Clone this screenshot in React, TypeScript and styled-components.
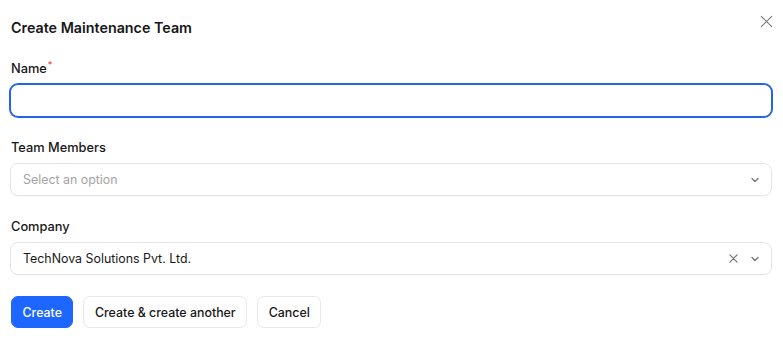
import React from "react";
import styled, { createGlobalStyle } from "styled-components";

const Global = createGlobalStyle`
  html, body { margin: 0; padding: 0; background: #fff; }
  body { font-family: Inter, "Noto Sans", sans-serif; color: #171717; -webkit-font-smoothing: antialiased; }
  * { box-sizing: border-box; }
`;

const Dialog = styled.div`
  position: relative;
  width: 783px;
  padding: 17px 11px 14px 10px;
  display: flex;
  flex-direction: column;
`;

const Title = styled.h2`
  margin: 0 0 19px 1px;
  font-size: 14.3px;
  line-height: 22px;
  font-weight: 600;
  color: #171717;
`;

const CloseButton = styled.button`
  position: absolute;
  top: 14px;
  right: 10px;
  width: 14px;
  height: 14px;
  padding: 0;
  border: 0;
  background: none;
  color: #7d7d7d;
  display: flex;
  align-items: center;
  justify-content: center;
`;

const Fields = styled.div`
  display: flex;
  flex-direction: column;
  gap: 20px;
`;

const Field = styled.div`
  display: flex;
  flex-direction: column;
  gap: 5px;
`;

const Label = styled.label`
  font-size: 12.8px;
  line-height: 20px;
  padding-top: 1px;
  font-weight: 500;
  color: #171717;
  padding-left: 1px;
`;

const Required = styled.sup`
  color: #ef4444;
  font-size: 9px;
  margin-left: 1px;
  vertical-align: 5px;
  line-height: 0;
`;

const TextInput = styled.input`
  height: 33px;
  width: 100%;
  border: 1px solid #2563eb;
  box-shadow: 0 0 0 1px #2563eb;
  border-radius: 8px;
  outline: none;
  padding: 0 12px;
  font: inherit;
  font-size: 12.4px;
`;

const SelectBox = styled.div`
  height: 33px;
  border: 1px solid #e5e5e5;
  border-radius: 8px;
  display: flex;
  align-items: center;
  padding: 0 10px 0 12px;
  font-size: 12.4px;
  box-shadow: 0 1px 1px rgba(0,0,0,0.03);
`;

const SelectValue = styled.span<{ $placeholder?: boolean }>`
  flex: 1;
  color: ${(p) => (p.$placeholder ? "#a3a3a3" : "#171717")};
`;

const Icons = styled.span`
  display: flex;
  align-items: center;
  gap: 11px;
  color: #737373;
`;

const Actions = styled.div`
  display: flex;
  gap: 10px;
  margin-top: 21px;
  padding-left: 1px;
`;

const Button = styled.button<{ $primary?: boolean }>`
  height: 32px;
  padding: 0 10.5px;
  border-radius: 7px;
  font: inherit;
  font-size: 12.4px;
  font-weight: 500;
  border: 1px solid ${(p) => (p.$primary ? "#1d66ff" : "#e8e8e8")};
  background: ${(p) => (p.$primary ? "#1d66ff" : "#fff")};
  color: ${(p) => (p.$primary ? "#fff" : "#171717")};
`;

const Chevron = () => (
  <svg width="12" height="12" viewBox="0 0 12 12" fill="none" stroke="currentColor" strokeWidth="1.3" strokeLinecap="round" strokeLinejoin="round">
    <path d="M3 4.5 6 7.5 9 4.5" />
  </svg>
);

const XIcon = ({ size = 10, stroke = 1.3 }: { size?: number; stroke?: number }) => (
  <svg width={size} height={size} viewBox="0 0 10 10" fill="none" stroke="currentColor" strokeWidth={stroke} strokeLinecap="round">
    <path d="M1 1 9 9M9 1 1 9" />
  </svg>
);

export default function App() {
  return (
    <>
      <Global />
      <Dialog>
        <Title>Create Maintenance Team</Title>
        <CloseButton aria-label="Close">
          <XIcon size={13} stroke={0.9} />
        </CloseButton>
        <Fields>
          <Field>
            <Label>
              Name<Required>*</Required>
            </Label>
            <TextInput />
          </Field>
          <Field>
            <Label>Team Members</Label>
            <SelectBox>
              <SelectValue $placeholder>Select an option</SelectValue>
              <Icons>
                <Chevron />
              </Icons>
            </SelectBox>
          </Field>
          <Field>
            <Label>Company</Label>
            <SelectBox>
              <SelectValue>TechNova Solutions Pvt. Ltd.</SelectValue>
              <Icons>
                <XIcon size={9} />
                <Chevron />
              </Icons>
            </SelectBox>
          </Field>
        </Fields>
        <Actions>
          <Button $primary>Create</Button>
          <Button>Create &amp; create another</Button>
          <Button>Cancel</Button>
        </Actions>
      </Dialog>
    </>
  );
}
